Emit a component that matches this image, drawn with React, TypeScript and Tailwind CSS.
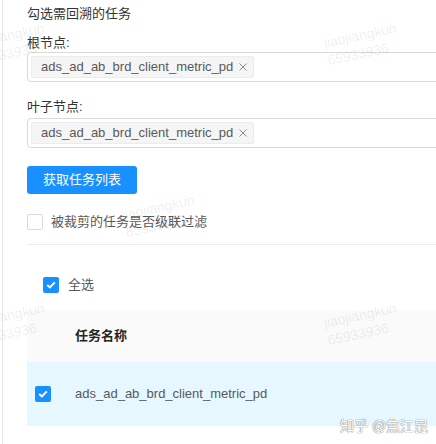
import React from "react";

const font = { fontFamily: '"Liberation Sans", "Noto Sans CJK SC", sans-serif' };

function Tag() {
  return (
    <span className="inline-flex items-center h-[22px] pl-[9px] pr-[6px] bg-[#f5f5f5] border border-[#ececec] rounded-[2px] text-[13px] text-[#595959]">
      ads_ad_ab_brd_client_metric_pd
      <svg className="ml-[6px]" width="8" height="8" viewBox="0 0 8 8">
        <path d="M0.5 0.5 L7.5 7.5 M7.5 0.5 L0.5 7.5" stroke="#8c8c8c" strokeWidth="1" />
      </svg>
    </span>
  );
}

function Select() {
  return (
    <div className="w-[430px] h-[30px] border border-[#d9d9d9] rounded-[4px] flex items-center pl-[3px]">
      <Tag />
    </div>
  );
}

function Check({ checked }: { checked: boolean }) {
  return checked ? (
    <span className="w-[16px] h-[16px] rounded-[2px] bg-[#1890ff] flex items-center justify-center shrink-0">
      <svg width="10" height="8" viewBox="0 0 10 8">
        <path d="M1.2 4 L3.9 6.4 L8.8 1.4" stroke="#fff" strokeWidth="2" fill="none" />
      </svg>
    </span>
  ) : (
    <span className="w-[16px] h-[16px] rounded-[2px] border border-[#d9d9d9] bg-white shrink-0" />
  );
}

function Watermark({ x, y }: { x: number; y: number }) {
  return (
    <div
      className="absolute pointer-events-none text-[14px] leading-[18px] text-[#000000]/[0.08] -rotate-[12deg] origin-top-left"
      style={{ left: x, top: y }}
    >
      <div>jiaojiangkun</div>
      <div>65933936</div>
    </div>
  );
}

export default function App() {
  return (
    <div className="relative w-[436px] h-[444px] overflow-hidden bg-white" style={font}>
      <div className="ml-[2px] h-full border-l border-[#e8e8e8] pl-[24px]">
        <div className="pt-[7px] text-[13px] leading-[14px] text-[#333]">勾选需回溯的任务</div>
        <div className="mt-[15px] text-[13px] leading-[14px] text-[#333]">根节点:</div>
        <div className="mt-[2px]">
          <Select />
        </div>
        <div className="mt-[18px] text-[13px] leading-[14px] text-[#333]">叶子节点:</div>
        <div className="mt-[4px]">
          <Select />
        </div>
        <button className="mt-[18px] h-[28px] w-[110px] rounded-[3px] bg-[#1890ff] text-white text-[13px] flex items-center justify-center">
          获取任务列表
        </button>
        <div className="mt-[20px] flex items-center h-[16px]">
          <Check checked={false} />
          <span className="ml-[8px] text-[13px] text-[#595959]">被裁剪的任务是否级联过滤</span>
        </div>
        <div className="mt-[14px] h-px w-[420px] bg-[#ececec]" />
        <div className="mt-[32px] ml-[16px] flex items-center h-[16px]">
          <Check checked={true} />
          <span className="ml-[9px] text-[13px] text-[#595959]">全选</span>
        </div>
        <div className="mt-[17px] w-[420px]">
          <div className="h-[52px] bg-[#fafafa] flex items-center pl-[48px] text-[13px] font-bold text-[#262626]">
            任务名称
          </div>
          <div className="h-[64px] bg-[#e6f7ff] flex items-center pl-[8px]">
            <Check checked={true} />
            <span className="ml-[24px] text-[13px] text-[#595959]">ads_ad_ab_brd_client_metric_pd</span>
          </div>
        </div>
      </div>
      <Watermark x={-30} y={34} />
      <Watermark x={322} y={34} />
      <Watermark x={120} y={206} />
      <Watermark x={-30} y={314} />
      <Watermark x={322} y={314} />
      <div className="absolute left-[340px] top-[416px] text-[14px] text-white [text-shadow:0_0_1px_#777,0_0_1px_#777]">
        知乎 @焦江昆
      </div>
    </div>
  );
}
